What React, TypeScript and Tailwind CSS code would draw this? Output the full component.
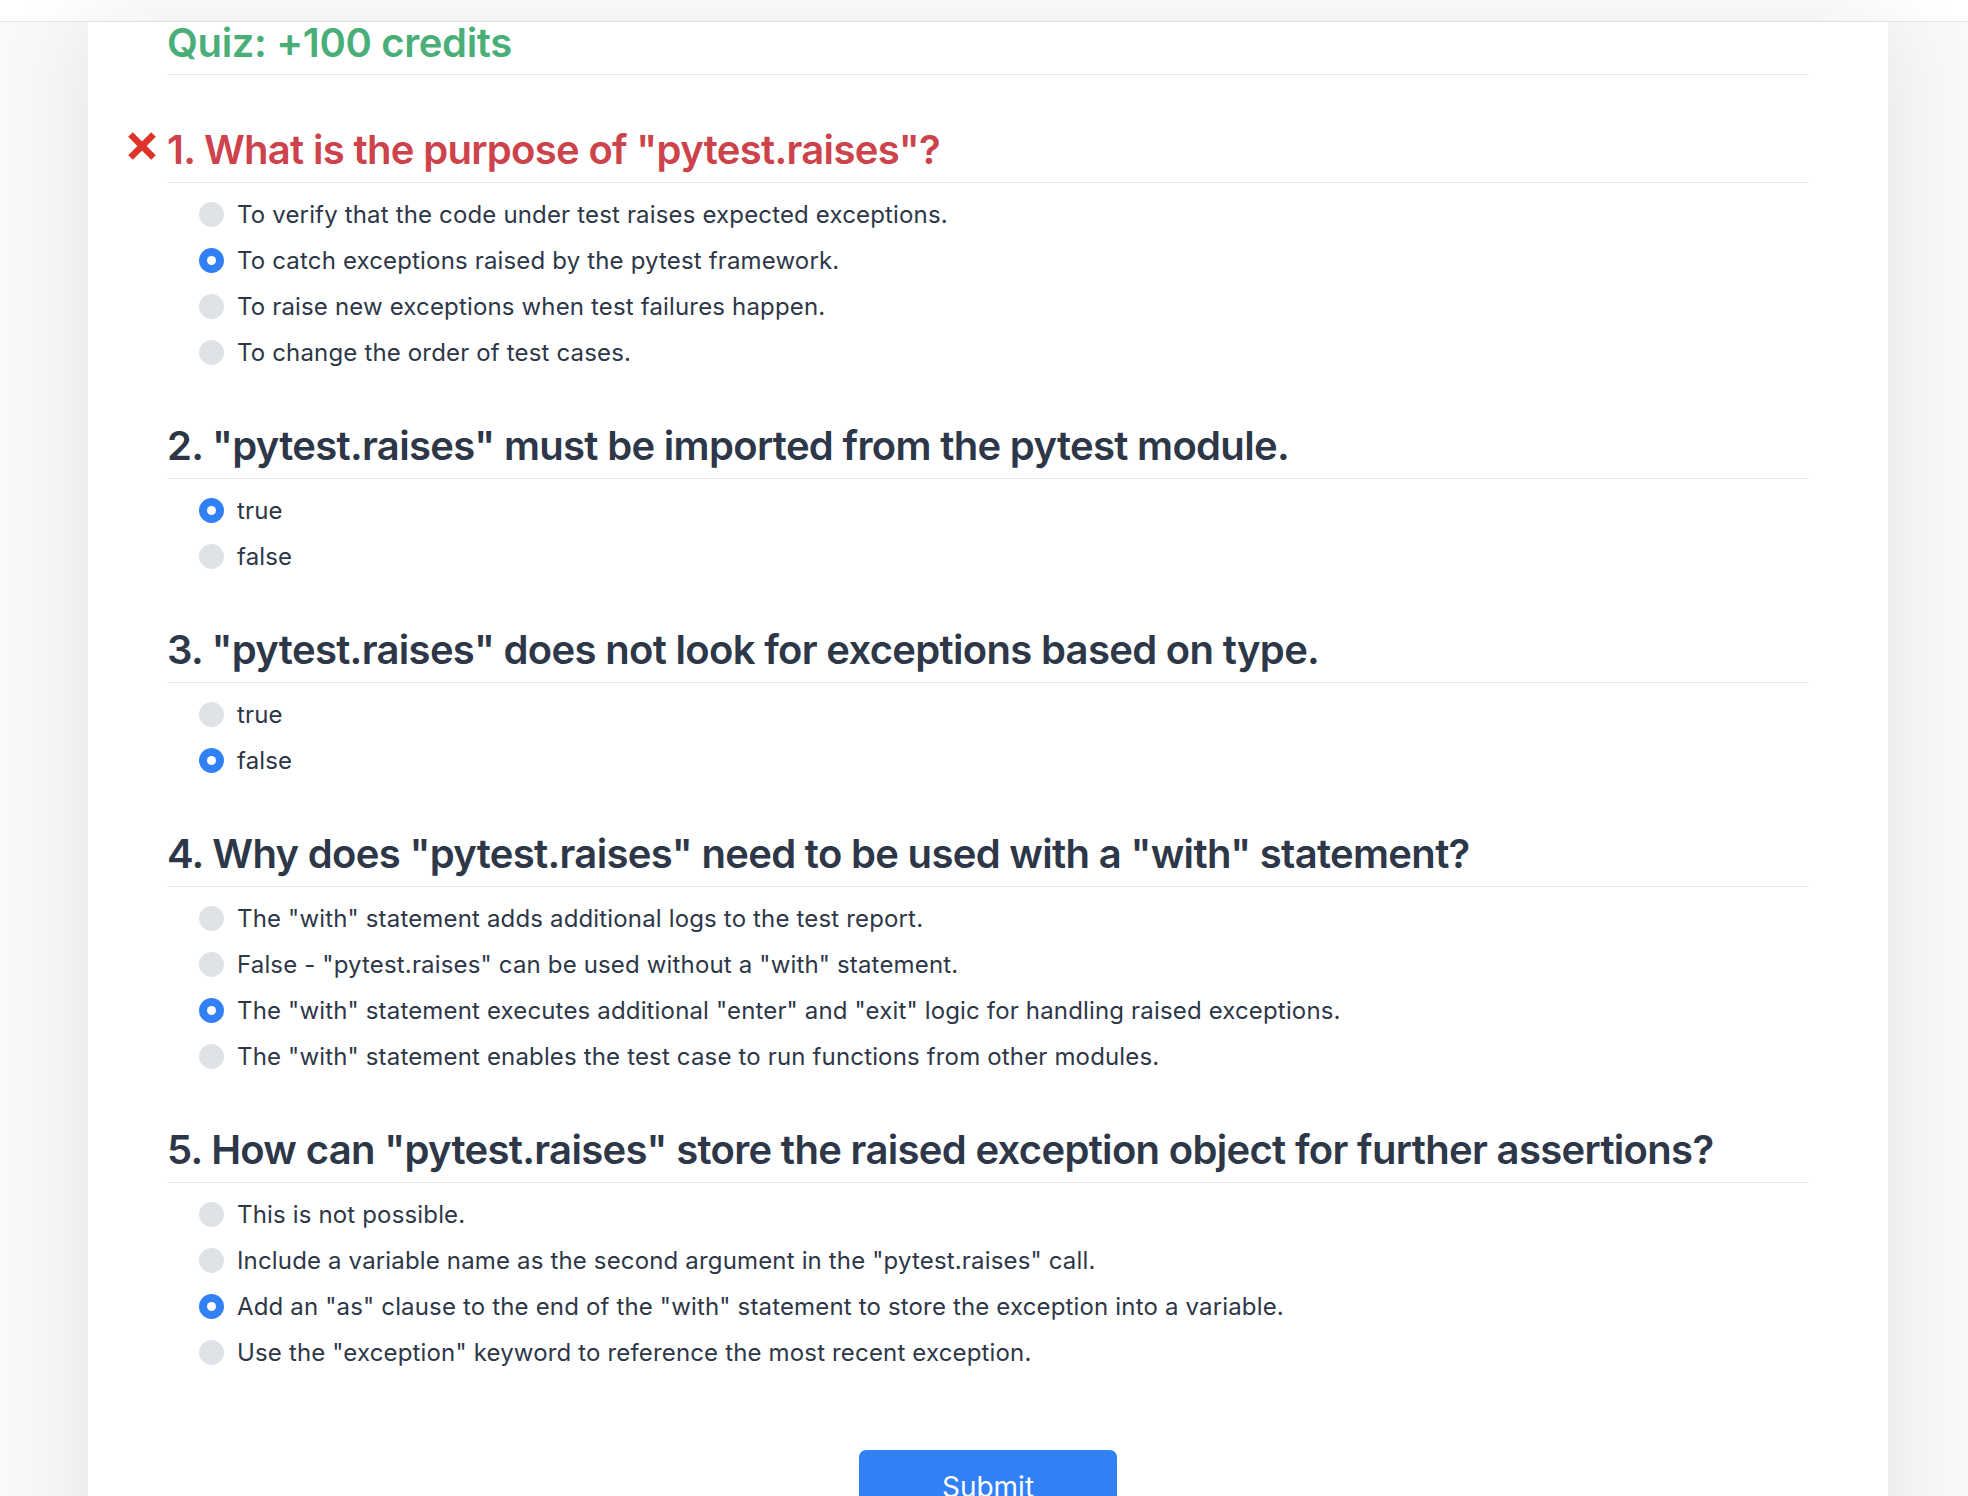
import React from 'react';

interface Question {
  title: string;
  options: string[];
  selected: number;
  wrong?: boolean;
}

const questions: Question[] = [
  {
    title: '1. What is the purpose of "pytest.raises"?',
    options: [
      'To verify that the code under test raises expected exceptions.',
      'To catch exceptions raised by the pytest framework.',
      'To raise new exceptions when test failures happen.',
      'To change the order of test cases.',
    ],
    selected: 1,
    wrong: true,
  },
  {
    title: '2. "pytest.raises" must be imported from the pytest module.',
    options: ['true', 'false'],
    selected: 0,
  },
  {
    title: '3. "pytest.raises" does not look for exceptions based on type.',
    options: ['true', 'false'],
    selected: 1,
  },
  {
    title: '4. Why does "pytest.raises" need to be used with a "with" statement?',
    options: [
      'The "with" statement adds additional logs to the test report.',
      'False - "pytest.raises" can be used without a "with" statement.',
      'The "with" statement executes additional "enter" and "exit" logic for handling raised exceptions.',
      'The "with" statement enables the test case to run functions from other modules.',
    ],
    selected: 2,
  },
  {
    title: '5. How can "pytest.raises" store the raised exception object for further assertions?',
    options: [
      'This is not possible.',
      'Include a variable name as the second argument in the "pytest.raises" call.',
      'Add an "as" clause to the end of the "with" statement to store the exception into a variable.',
      'Use the "exception" keyword to reference the most recent exception.',
    ],
    selected: 2,
  },
];

function Radio({ checked }: { checked: boolean }) {
  if (checked) {
    return (
      <span className="w-[25px] h-[25px] rounded-full bg-[#3180f6] flex items-center justify-center shrink-0">
        <span className="w-[9px] h-[9px] rounded-full bg-white" />
      </span>
    );
  }
  return <span className="w-[25px] h-[25px] rounded-full bg-[#dfe2e6] shrink-0" />;
}

// red cross shown next to a wrongly answered question
function CrossMark() {
  return (
    <svg width="30" height="30" viewBox="0 0 30 30" className="absolute right-full mr-[10px] top-[5px]">
      <g stroke="#df3327" strokeWidth="6.5" strokeLinecap="butt">
        <line x1="3.5" y1="3.5" x2="26.5" y2="26.5" />
        <line x1="26.5" y1="3.5" x2="3.5" y2="26.5" />
      </g>
    </svg>
  );
}

export default function App() {
  return (
    <div className="min-h-screen bg-[#f8f9fb] font-['Inter',sans-serif] text-[#2d3748]">
      <div className="h-[22px] bg-white border-b border-[#e6e8eb]" />
      <div className="w-[1800px] ml-[88px] bg-white shadow-[0_0_90px_rgba(0,0,0,0.09)] px-[79px] pb-[120px]">
        <h1 className="text-[40px] leading-[42px] font-semibold tracking-[-0.35px] text-[#4aae78] pb-[10px] border-b border-[#e6e8eb] mb-[51px]">
          Quiz: +100 credits
        </h1>

        {questions.map((q, qi) => (
          <div key={qi} className={qi > 0 ? 'mt-[47px]' : ''}>
            <h2
              className={`relative text-[40px] leading-[48px] font-semibold tracking-[-0.68px] pb-[8px] border-b border-[#e6e8eb] ${
                q.wrong ? 'text-[#cd434b]' : 'text-[#2d3748]'
              }`}
            >
              {q.wrong && <CrossMark />}
              {q.title}
            </h2>
            <div className="mt-[8px] pl-[32px]">
              {q.options.map((opt, oi) => (
                <label key={oi} className="h-[46px] flex items-center gap-[13px] text-[24px] tracking-[0.16px] text-[#2d3748]">
                  <Radio checked={oi === q.selected} />
                  <span className="pt-[2px]">{opt}</span>
                </label>
              ))}
            </div>
          </div>
        ))}

        <div className="flex justify-center mt-[75px]">
          <button className="w-[258px] rounded-[7px] bg-[#3180f6] text-white text-[28px] leading-[36px] pt-[19px] pb-[19px]">
            Submit
          </button>
        </div>
      </div>
    </div>
  );
}
